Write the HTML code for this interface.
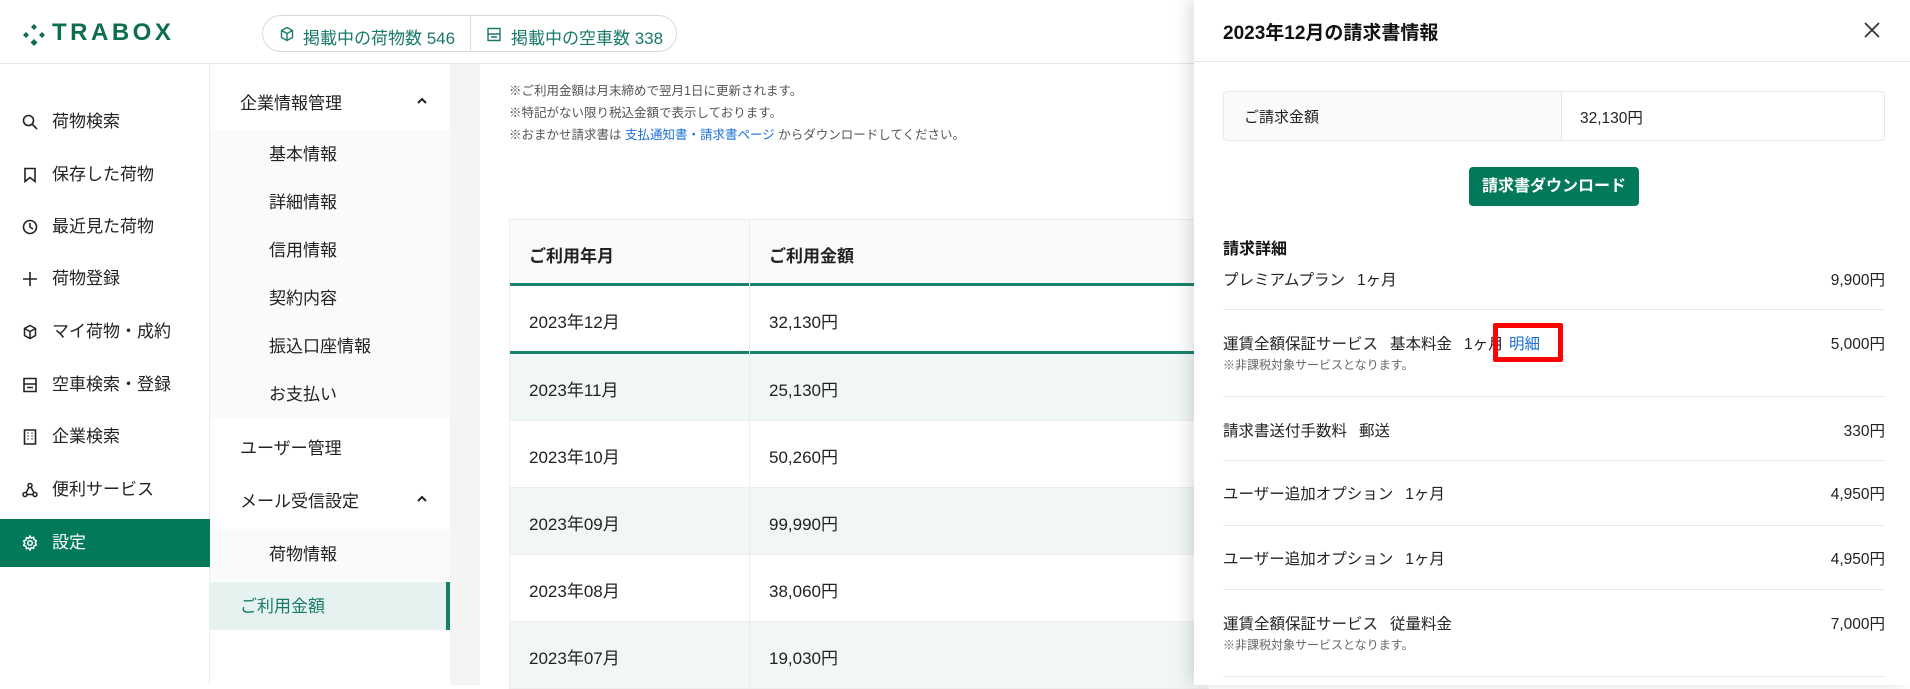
<!DOCTYPE html>
<html><head><meta charset="utf-8"><style>
*{margin:0;padding:0;box-sizing:border-box}
body{width:1910px;height:685px;overflow:hidden;background:#fff;font-family:"Liberation Sans","Noto Sans CJK JP",sans-serif;color:#222;position:relative}
.a{position:absolute}
.hdr{left:0;top:0;width:1910px;height:64px;border-bottom:1px solid #e6e6e6;background:#fff}
.logo{left:52px;top:19px;font-size:24px;font-weight:bold;letter-spacing:3.5px;color:#0d6e4f}
.pill{left:262px;top:15px;width:415px;height:37px;border:1px solid #d8d8d8;border-radius:19px;color:#1a7a6a;font-size:17px}
.pill span{position:absolute;top:8px}
.nav1{left:0;top:64px;width:210px;height:621px;border-right:1px solid #eee}
.n1{position:absolute;left:0;width:210px;height:48px;font-size:17px;line-height:48px;padding-left:52px;color:#222}
.n1 svg{position:absolute;left:22px;top:16px}
.nav2{left:210px;top:64px;width:240px;height:621px;background:#fff}
.n2{position:absolute;left:0;width:240px;font-size:17px;color:#222}
.strip{left:450px;top:64px;width:30px;height:621px;background:#f4f4f4}
.note{left:509px;font-size:12.5px;color:#555}
.tbl{left:509px;top:219px;width:700px}
.row{position:absolute;left:0;width:700px;height:67px;font-size:17px;border-bottom:1px solid #eee}
.row span{position:absolute;top:22px}
.panel{left:1194px;top:0;width:716px;height:685px;background:#fff;box-shadow:-6px 0 14px rgba(0,0,0,.12)}
.it{position:absolute;left:29px;font-size:15.5px;color:#222}
.it b{display:inline-block;width:12px}
.amt{position:absolute;right:25px;font-size:15.5px;color:#222}
.sub{position:absolute;left:29px;font-size:12px;color:#666}
.ln{position:absolute;left:29px;width:662px;height:1px;background:#e8e8e8}
</style></head><body>
<div class="a hdr"></div>
<svg class="a" style="left:22px;top:23px" width="24" height="24" viewBox="0 0 24 24" fill="#0d6e4f"><path d="M12 1l3 3-3 3-3-3z"/><path d="M4 9l3 3-3 3-3-3z"/><path d="M20 9l3 3-3 3-3-3z"/><path d="M12 16l3.5 3.5L12 23l-3.5-3.5z"/></svg>
<div class="a logo">TRABOX</div>
<div class="a pill">
<svg style="position:absolute;left:16px;top:10px" width="16" height="16" viewBox="0 0 16 16" fill="none" stroke="#1a7a6a" stroke-width="1.4"><path d="M8 1.5l5.5 3v7L8 14.5 2.5 11.5v-7z M2.5 4.5L8 7.5l5.5-3 M8 7.5v7"/></svg>
<span style="left:40px">掲載中の荷物数 546</span>
<div style="position:absolute;left:207px;top:0;width:1px;height:35px;background:#ddd"></div>
<svg style="position:absolute;left:223px;top:11px" width="16" height="15" viewBox="0 0 16 15" fill="none" stroke="#1a7a6a" stroke-width="1.4"><path d="M2 1.5h12v12H2z M2 7h12 M5 10h6"/></svg>
<span style="left:248px">掲載中の空車数 338</span>
</div>

<div class="a nav1">
<div class="n1" style="top:34px"><svg width="16" height="16" viewBox="0 0 16 16" fill="none" stroke="#222" stroke-width="1.6"><circle cx="6.5" cy="6.5" r="5"/><path d="M10 10l5 5"/></svg>荷物検索</div>
<div class="n1" style="top:87px"><svg width="16" height="16" viewBox="0 0 16 16" fill="none" stroke="#222" stroke-width="1.6"><path d="M3 1.5h10v13l-5-4-5 4z"/></svg>保存した荷物</div>
<div class="n1" style="top:139px"><svg width="16" height="16" viewBox="0 0 16 16" fill="none" stroke="#222" stroke-width="1.6"><circle cx="8" cy="8" r="6.5"/><path d="M8 4v4l3 2"/></svg>最近見た荷物</div>
<div class="n1" style="top:191px"><svg width="16" height="16" viewBox="0 0 16 16" fill="none" stroke="#222" stroke-width="1.6"><path d="M8 1v14M1 8h14"/></svg>荷物登録</div>
<div class="n1" style="top:244px"><svg width="16" height="16" viewBox="0 0 16 16" fill="none" stroke="#222" stroke-width="1.5"><path d="M8 1.5l5.5 3v7L8 14.5 2.5 11.5v-7z M2.5 4.5L8 7.5l5.5-3 M8 7.5v7"/></svg>マイ荷物・成約</div>
<div class="n1" style="top:297px"><svg width="16" height="16" viewBox="0 0 16 16" fill="none" stroke="#222" stroke-width="1.6"><path d="M2 1.5h12v13H2z M2 7h12 M5 10.5h6"/></svg>空車検索・登録</div>
<div class="n1" style="top:349px"><svg width="16" height="16" viewBox="0 0 16 16" fill="none" stroke="#222" stroke-width="1.6"><path d="M2.5 1h11v14h-11z M5.5 4h1M9.5 4h1M5.5 7h1M9.5 7h1M5.5 10h1M9.5 10h1"/></svg>企業検索</div>
<div class="n1" style="top:402px"><svg width="16" height="16" viewBox="0 0 16 16" fill="none" stroke="#222" stroke-width="1.5"><circle cx="8" cy="3.5" r="2"/><circle cx="3" cy="12.5" r="2"/><circle cx="13" cy="12.5" r="2"/><path d="M7 5.3L4 10.7M9 5.3l3 5.4M5 12.5h6"/></svg>便利サービス</div>
<div class="n1" style="top:455px;background:#02795a;color:#fff"><svg width="16" height="16" viewBox="0 0 16 16" fill="none" stroke="#fff" stroke-width="1.5"><circle cx="8" cy="8" r="2.3"/><path d="M8 1l1.3 2 2.3-.7.4 2.4 2.3.9-1 2.2 1 2.2-2.3.9-.4 2.4-2.3-.7L8 15l-1.3-2-2.3.7-.4-2.4-2.3-.9 1-2.2-1-2.2 2.3-.9.4-2.4 2.3.7z"/></svg>設定</div>
</div>

<div class="a nav2">
<div class="n2" style="top:25px;left:30px">企業情報管理</div>
<svg class="a" style="left:206px;top:33px" width="12" height="8" viewBox="0 0 12 8" fill="none" stroke="#222" stroke-width="2"><path d="M2 6l4-4 4 4"/></svg>
<div class="a" style="left:0;top:66px;width:240px;height:288px;background:#fafafa"></div>
<div class="n2" style="top:76px;left:59px">基本情報</div>
<div class="n2" style="top:124px;left:59px">詳細情報</div>
<div class="n2" style="top:172px;left:59px">信用情報</div>
<div class="n2" style="top:220px;left:59px">契約内容</div>
<div class="n2" style="top:268px;left:59px">振込口座情報</div>
<div class="n2" style="top:316px;left:59px">お支払い</div>
<div class="n2" style="top:370px;left:30px">ユーザー管理</div>
<div class="n2" style="top:423px;left:30px">メール受信設定</div>
<svg class="a" style="left:206px;top:431px" width="12" height="8" viewBox="0 0 12 8" fill="none" stroke="#222" stroke-width="2"><path d="M2 6l4-4 4 4"/></svg>
<div class="a" style="left:0;top:465px;width:240px;height:52px;background:#fafafa"></div>
<div class="n2" style="top:476px;left:59px">荷物情報</div>
<div class="a" style="left:0;top:518px;width:240px;height:48px;background:#e6f2ef;border-right:4px solid #16806a"></div>
<div class="n2" style="top:528px;left:30px;color:#1a7a6a">ご利用金額</div>
</div>
<div class="a strip"></div>

<div class="a note" style="top:80px">※ご利用金額は月末締めで翌月1日に更新されます。</div>
<div class="a note" style="top:102px">※特記がない限り税込金額で表示しております。</div>
<div class="a note" style="top:124px">※おまかせ請求書は <span style="color:#1a6fd8">支払通知書・請求書ページ</span> からダウンロードしてください。</div>

<div class="a tbl">
<div class="row" style="top:0;background:#fafafa;border-top:1px solid #eee;border-bottom:3px solid #1b826c;font-weight:bold"><span style="left:20px">ご利用年月</span><span style="left:260px">ご利用金額</span></div>
<div class="row" style="top:67px;height:68px;border-bottom:3px solid #1b826c"><span style="left:20px">2023年12月</span><span style="left:260px">32,130円</span></div>
<div class="row" style="top:135px;background:#f1f7f6"><span style="left:20px">2023年11月</span><span style="left:260px">25,130円</span></div>
<div class="row" style="top:202px"><span style="left:20px">2023年10月</span><span style="left:260px">50,260円</span></div>
<div class="row" style="top:269px;background:#f1f7f6"><span style="left:20px">2023年09月</span><span style="left:260px">99,990円</span></div>
<div class="row" style="top:336px"><span style="left:20px">2023年08月</span><span style="left:260px">38,060円</span></div>
<div class="row" style="top:403px;background:#f1f7f6"><span style="left:20px">2023年07月</span><span style="left:260px">19,030円</span></div>
<div class="a" style="left:240px;top:0;width:1px;height:470px;background:#eee"></div>
<div class="a" style="left:0;top:0;width:1px;height:470px;background:#eee"></div>
</div>

<div class="a panel">
<div class="a" style="left:29px;top:18px;font-size:19px;font-weight:bold;color:#111">2023年12月の請求書情報</div>
<svg class="a" style="left:670px;top:22px" width="16" height="16" viewBox="0 0 16 16" stroke="#333" stroke-width="1.8"><path d="M1 1l14 14M15 1L1 15"/></svg>
<div class="a" style="left:0;top:61px;width:716px;height:1px;background:#e6e6e6"></div>
<div class="a" style="left:29px;top:91px;width:662px;height:50px;border:1px solid #e6e6e6;border-radius:4px;overflow:hidden">
<div class="a" style="left:0;top:0;width:338px;height:48px;background:#fafafa;border-right:1px solid #e6e6e6"></div>
<div class="a" style="left:20px;top:14px;font-size:15px">ご請求金額</div>
<div class="a" style="left:356px;top:14px;font-size:15.5px">32,130円</div>
</div>
<div class="a" style="left:275px;top:167px;width:170px;height:39px;background:#02795a;border-radius:4px;color:#fff;font-weight:bold;font-size:16px;text-align:center;line-height:39px">請求書ダウンロード</div>
<div class="a" style="left:29px;top:235px;font-size:16px;font-weight:bold;color:#111">請求詳細</div>
<div class="it" style="top:268px">プレミアムプラン<b></b>1ヶ月</div><div class="amt" style="top:268px">9,900円</div>
<div class="ln" style="top:309px"></div>
<div class="it" style="top:332px">運賃全額保証サービス<b></b>基本料金<b></b>1ヶ月</div><div class="amt" style="top:332px">5,000円</div>
<div class="a" style="left:315px;top:332px;font-size:15.5px;color:#1a6fd8">明細</div>
<div class="sub" style="top:356px">※非課税対象サービスとなります。</div>
<div class="a" style="left:299px;top:323px;width:70px;height:39px;border:5px solid #f00;border-radius:2px"></div>
<div class="ln" style="top:396px"></div>
<div class="it" style="top:419px">請求書送付手数料<b></b>郵送</div><div class="amt" style="top:419px">330円</div>
<div class="ln" style="top:460px"></div>
<div class="it" style="top:482px">ユーザー追加オプション<b></b>1ヶ月</div><div class="amt" style="top:482px">4,950円</div>
<div class="ln" style="top:525px"></div>
<div class="it" style="top:547px">ユーザー追加オプション<b></b>1ヶ月</div><div class="amt" style="top:547px">4,950円</div>
<div class="ln" style="top:589px"></div>
<div class="it" style="top:612px">運賃全額保証サービス<b></b>従量料金</div><div class="amt" style="top:612px">7,000円</div>
<div class="sub" style="top:636px">※非課税対象サービスとなります。</div>
<div class="ln" style="top:676px"></div>
</div>
</body></html>
